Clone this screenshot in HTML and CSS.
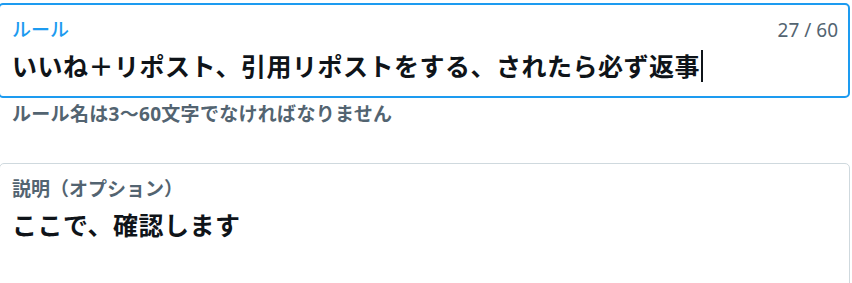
FILE: index.html
```html
<!DOCTYPE html>
<html>
<head>
<meta charset="utf-8">
<title>ルール</title>
<link rel="stylesheet" href="styles.css">
</head>
<body>
<div class="page">
  <!-- ルール名 -->
  <label class="field is-focused">
    <div class="field-head">
      <span class="field-label">ルール</span>
      <span class="field-count">27 / 60</span>
    </div>
    <div class="field-value">いいね＋リポスト、引用リポストをする、されたら必ず返事<span class="caret"></span></div>
  </label>
  <div class="field-hint">ルール名は3〜60文字でなければなりません</div>

  <!-- 説明 -->
  <label class="field field-area">
    <div class="field-head">
      <span class="field-label">説明（オプション）</span>
    </div>
    <div class="field-value">ここで、確認します</div>
  </label>
</div>
</body>
</html>
```

FILE: styles.css
```css
body {
	margin:0;
	background:#fff;
	font-family:"Noto Sans", "Noto Sans CJK JP", sans-serif;
	color:#0f1419;
}
.page {
	padding-top:3px;
}
.field {
	display:block;
	width:852px;
	margin-left:-2px;
	border:2px solid #1d9bf0;
	border-radius:5px;
	padding:15px 0 14px 12px;
	box-sizing:border-box;
}
.field .field-head {
	display:flex;
	justify-content:space-between;
	align-items:center;
	height:20px;
	padding-right:10px;
}
.field .field-label {
	font-size:19px;
	line-height:20px;
	font-weight:500;
	color:#536471;
}
.field.is-focused .field-label {
	color:#1d9bf0;
}
.field .field-count {
	font-size:19px;
	line-height:20px;
	color:#536471;
}
.field .field-value {
	margin-top:10px;
	font-size:25px;
	line-height:32px;
	font-weight:bold;
	letter-spacing:0.5px;
	white-space:nowrap;
}
.field .caret {
	display:inline-block;
	width:2px;
	height:32px;
	margin-left:1px;
	background:#0f1419;
	vertical-align:top;
}
.field-hint {
	margin-top:6px;
	font-size:19px;
	line-height:20px;
	letter-spacing:0.3px;
	font-weight:bold;
	color:#536471;
	padding-left:12px;
}
.field-area {
	margin-top:39px;
	margin-left:-1px;
	width:851px;
	border:1px solid #cfd9de;
	padding:15px 0 60px 12px;
}
.field-area .field-label {
	font-weight:bold;
}
```
